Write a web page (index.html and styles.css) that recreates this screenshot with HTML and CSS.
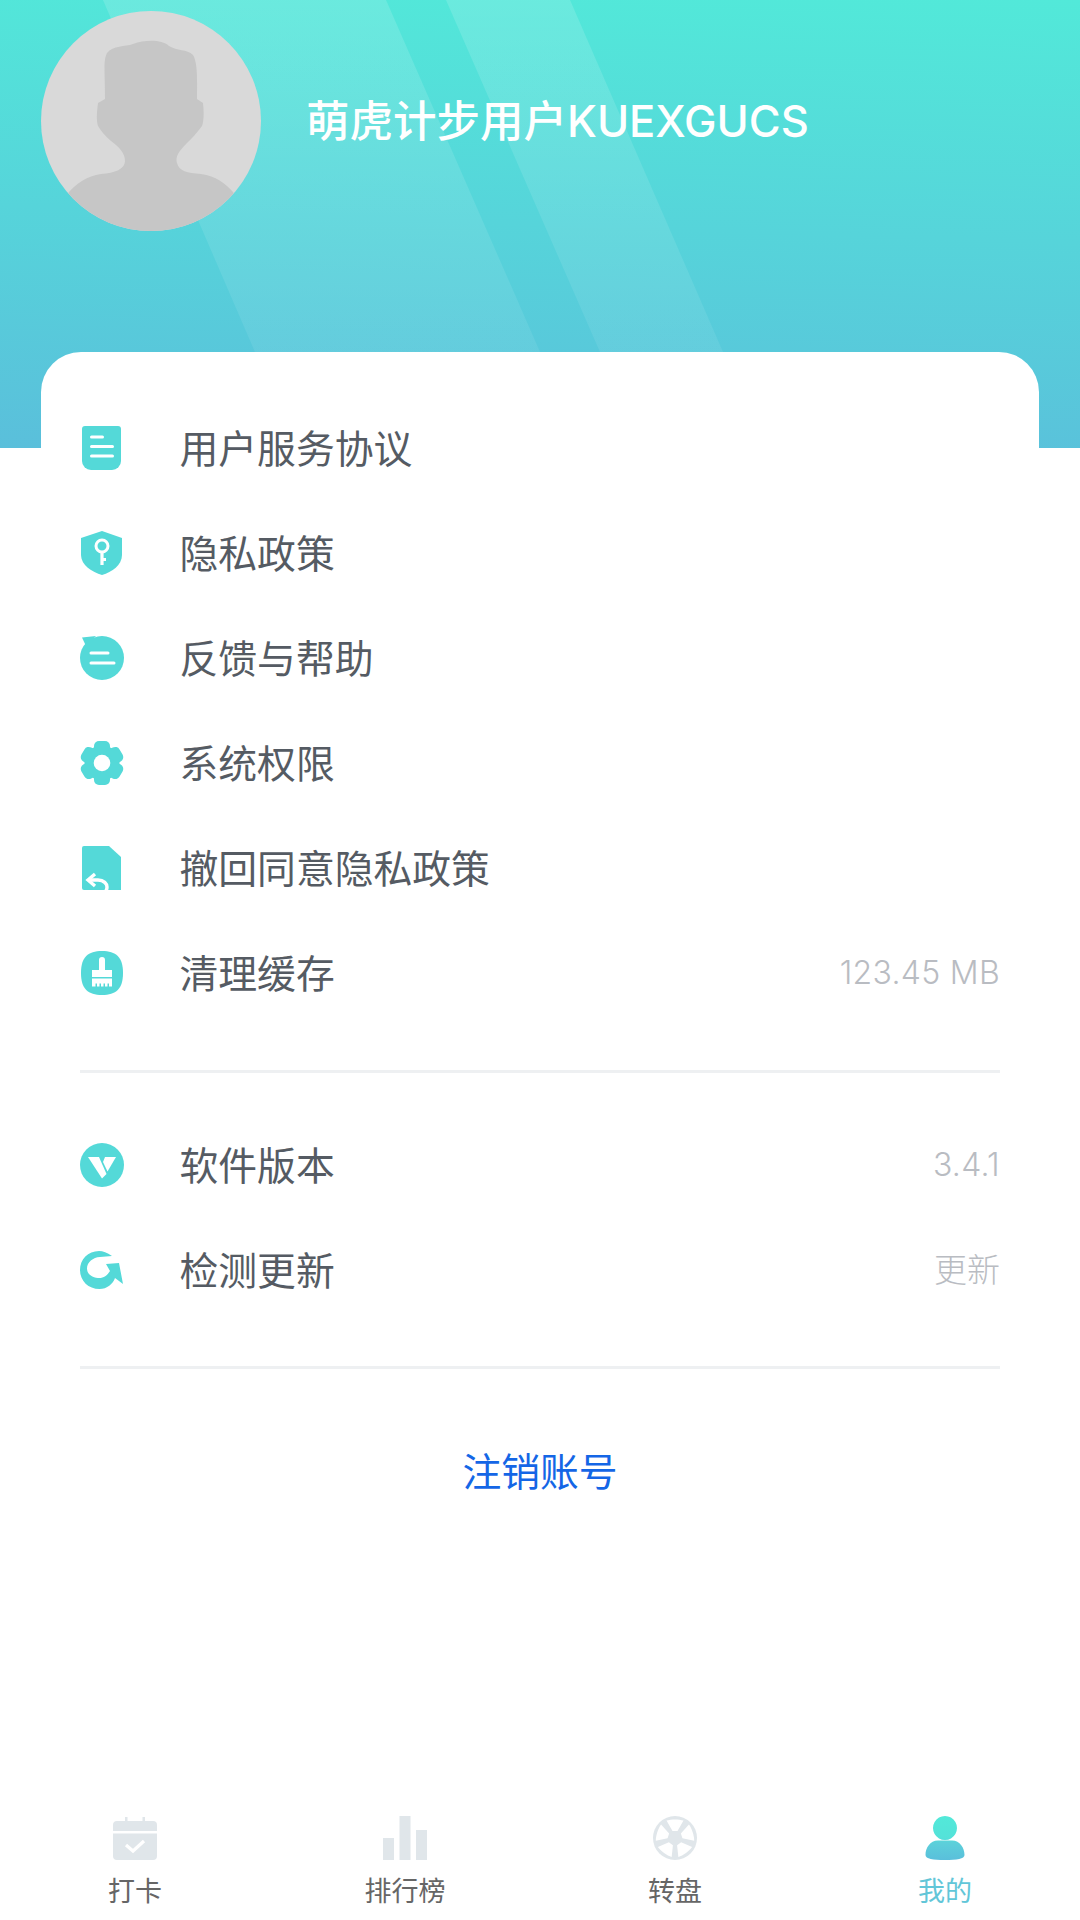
FILE: index.html
```html
<!DOCTYPE html>
<html lang="zh-CN">
<head>
<meta charset="utf-8">
<title>我的</title>
<link rel="stylesheet" href="styles.css">
</head>
<body>
<div class="page">
  <header class="hero">
    <svg class="hero-bands" viewBox="0 0 1080 448" preserveAspectRatio="none" aria-hidden="true">
      <defs><linearGradient id="bandfade" x1="0" y1="0" x2="0" y2="1"><stop offset="0" stop-color="#fff" stop-opacity="0.14"/><stop offset="1" stop-color="#fff" stop-opacity="0.07"/></linearGradient></defs>
      <polygon points="103,0 386,0 540,352 255,352" fill="url(#bandfade)" />
      <polygon points="446,0 570,0 723,352 600,352" fill="url(#bandfade)" />
    </svg>
    <svg class="avatar" viewBox="0 0 220 220" aria-hidden="true">
      <defs><clipPath id="av"><circle cx="110" cy="110" r="110"/></clipPath></defs>
      <circle cx="110" cy="110" r="110" fill="#d9d9d9"/>
      <path clip-path="url(#av)" fill="#c6c6c6" d="M64 88 C64 60 62 50 66 42 C72 34 84 36 92 33 C104 29 120 28 128 35 C136 40 146 38 152 44 C157 52 156 70 156 88 L162 92 C163 100 163 110 161 115 C156 122 150 128 146 132 C138 140 134 146 136 152 C138 160 146 162 160 163 C175 165 184 172 192 181 L220 230 L0 230 L28 181 C36 172 46 165 60 163 C74 162 84 158 84 150 C84 142 78 136 70 130 C64 125 60 120 57 115 C55 108 56 100 57 92 Z"/>
    </svg>
    <div class="name">萌虎计步用户KUEXGUCS</div>
  </header>

  <main class="card">
    <ul class="list">
      <li class="row">
        <svg class="icon" viewBox="0 0 44 44"><path fill="#54d9d8" d="M2 3a3 3 0 0 1 3-3h33a3 3 0 0 1 3 3v32a9 9 0 0 1-9 9H11a9 9 0 0 1-9-9z"/><g stroke="#fff" stroke-width="3" stroke-linecap="round"><path d="M11.500 11h11M11.500 20.500h21M11.500 30h21"/></g></svg>
        <span class="label">用户服务协议</span>
      </li>
      <li class="row">
        <svg class="icon" viewBox="0 0 44 44"><path fill="#54d9d8" d="M22 0 L42 7 V24 C42 34 32 41 22 44 C12 41 1 34 1 24 V7 Z"/><circle cx="22" cy="15" r="6" fill="none" stroke="#fff" stroke-width="3"/><path d="M22 21V34M22 28.500h4" stroke="#fff" stroke-width="3.200" fill="none"/></svg>
        <span class="label">隐私政策</span>
      </li>
      <li class="row">
        <svg class="icon" viewBox="0 0 44 44"><circle cx="22" cy="22" r="22" fill="#54d9d8"/><path fill="#54d9d8" d="M2 1.500 L16 0 L6 10 Z"/><path d="M11 17h17M11 27h23" stroke="#fff" stroke-width="3" stroke-linecap="round"/></svg>
        <span class="label">反馈与帮助</span>
      </li>
      <li class="row">
        <svg class="icon" viewBox="0 0 44 44"><g fill="#54d9d8"><circle cx="22" cy="22" r="17.500"/><rect x="14" y="0" width="16" height="44" rx="5"/><rect x="14" y="0" width="16" height="44" rx="5" transform="rotate(60 22 22)"/><rect x="14" y="0" width="16" height="44" rx="5" transform="rotate(120 22 22)"/></g><circle cx="22" cy="22" r="8.300" fill="#fff"/></svg>
        <span class="label">系统权限</span>
      </li>
      <li class="row">
        <svg class="icon" viewBox="0 0 44 44"><defs><clipPath id="doc"><path d="M2 2a2 2 0 0 1 2-2H29L41 11V44H4a2 2 0 0 1-2-2z"/></clipPath></defs><path fill="#54d9d8" d="M2 2a2 2 0 0 1 2-2H29L41 11V44H4a2 2 0 0 1-2-2z"/><g clip-path="url(#doc)" fill="none" stroke="#fff" stroke-width="3.400"><path d="M15 28 L8 34 L15 40"/><path d="M8 34H18C24 34 27 38 27 41C27 43 26 45 25 46"/></g></svg>
        <span class="label">撤回同意隐私政策</span>
      </li>
      <li class="row">
        <svg class="icon" viewBox="0 0 44 44"><path fill="#54d9d8" d="M22 0C36 0 43 6 43 22S36 44 22 44 1 38 1 22 8 0 22 0Z"/><path fill="#fff" d="M19 9a3 3 0 0 1 6 0v10h7v7h-20v-7h7zM12 27.500h20v8H29v-3h-1.500v3H25v-3h-1.500v3H21v-3h-1.500v3H17v-3h-1.500v3H12z"/></svg>
        <span class="label">清理缓存</span>
        <span class="value">123.45 MB</span>
      </li>
    </ul>
    <hr class="rule rule-a">
    <ul class="list list-b">
      <li class="row">
        <svg class="icon" viewBox="0 0 44 44"><circle cx="22" cy="22" r="22" fill="#54d9d8"/><path fill="#fff" d="M8 14H19L26.500 31L22 35.500Z"/><path fill="#fff" d="M25 14H36L27.500 28.500L23 19Z"/></svg>
        <span class="label">软件版本</span>
        <span class="value">3.4.1</span>
      </li>
      <li class="row">
        <svg class="icon" viewBox="0 0 44 44"><path fill="#54d9d8" d="M32 8 C27 4.500 23 3 19 3 C8 3 0 11.500 0 22 C0 33 8.500 41 19.500 41 C27 41 33 36 35 30 L43 36 L39 15 L26 16 L30 23 C27 28 23 30.500 18 30 C12 29.500 7 26 7 20.500 C7 14 13 9.500 20 9 C24 8.700 28 8.500 32 8 Z"/></svg>
        <span class="label">检测更新</span>
        <span class="value value-cjk">更新</span>
      </li>
    </ul>
    <hr class="rule rule-b">
    <div class="cancel">注销账号</div>
  </main>

  <nav class="tabs">
    <div class="tab">
      <svg class="tab-icon" viewBox="0 0 44 44"><path fill="#e0e6ea" d="M12 1h2.500v4h15V1H32v4h8a4 4 0 0 1 4 4v6H0V9a4 4 0 0 1 4-4h8zM0 17.500h44V40a4 4 0 0 1-4 4H4a4 4 0 0 1-4-4z"/><path d="M13 29l7 6 11-10" fill="none" stroke="#fff" stroke-width="3.200"/></svg>
      <span class="tab-label">打卡</span>
    </div>
    <div class="tab">
      <svg class="tab-icon" viewBox="0 0 44 44"><g fill="#e0e6ea"><rect x="0" y="22" width="11" height="22"/><rect x="16.500" y="0" width="11" height="44"/><rect x="33" y="14" width="11" height="30"/></g></svg>
      <span class="tab-label">排行榜</span>
    </div>
    <div class="tab">
      <svg class="tab-icon" viewBox="0 0 44 44"><circle cx="22" cy="22" r="22" fill="#e0e6ea"/><g fill="#fff"><path d="M13.500 4.600 C18 3 26 3 30.500 4.600 L24.500 15 H19.500 Z"/><path d="M13.500 4.600 C18 3 26 3 30.500 4.600 L24.500 15 H19.500 Z" transform="rotate(72 22 22)"/><path d="M13.500 4.600 C18 3 26 3 30.500 4.600 L24.500 15 H19.500 Z" transform="rotate(144 22 22)"/><path d="M13.500 4.600 C18 3 26 3 30.500 4.600 L24.500 15 H19.500 Z" transform="rotate(216 22 22)"/><path d="M13.500 4.600 C18 3 26 3 30.500 4.600 L24.500 15 H19.500 Z" transform="rotate(288 22 22)"/></g></svg>
      <span class="tab-label">转盘</span>
    </div>
    <div class="tab tab-on">
      <svg class="tab-icon" viewBox="0 0 44 44"><defs><linearGradient id="ug" x1="0" y1="0" x2="0" y2="1"><stop offset="0" stop-color="#52e9d9"/><stop offset="0.5" stop-color="#54e2d9"/><stop offset="0.6" stop-color="#5cd0da"/><stop offset="1" stop-color="#5abfdb"/></linearGradient></defs><path fill="url(#ug)" d="M22 0a12 12 0 1 1-.01 0ZM15 24.500H29C37 24.500 41.500 32 41.500 39C41.500 43 34 44 22 44S2.500 43 2.500 39C2.500 32 7 24.500 15 24.500Z"/></svg>
      <span class="tab-label">我的</span>
    </div>
  </nav>
</div>
</body>
</html>
```
FILE: styles.css
```css
* { box-sizing: border-box; }
html, body { margin: 0; padding: 0; }
body { font-family: "Noto Sans CJK SC", "Noto Sans", sans-serif; background: #fff; }

.page {
  width: 1080px;
  height: 1920px;
  display: flex;
  flex-direction: column;
  overflow: hidden;
  background: #fff;
}

.hero {
  position: relative;
  flex: none;
  height: 448px;
  padding: 11px 0 0 41px;
  display: flex;
  align-items: flex-start;
  background: linear-gradient(182deg, #52e9d9 0%, #5abfdb 100%);
}
.hero-bands { position: absolute; left: 0; top: 0; width: 1080px; height: 448px; }
.avatar { position: relative; width: 220px; height: 220px; flex: none; }
.name {
  position: relative;
  margin: 0 0 0 45px;
  height: 220px;
  line-height: 220px;
  font-family: "Inter", "Noto Sans CJK SC", sans-serif;
  font-size: 43.500px;
  font-weight: 500;
  color: #fff;
  white-space: nowrap;
}

.card {
  position: relative;
  flex: none;
  margin: -96px 41px 0;
  padding: 43px 39px 0;
  background: #fff;
  border-radius: 40px 40px 0 0;
}
.list { list-style: none; margin: 0; padding: 0; }
.row {
  height: 105px;
  display: flex;
  align-items: center;
}
.icon { width: 44px; height: 44px; flex: none; }
.label {
  margin-left: 55.500px;
  padding-bottom: 4px;
  font-size: 38.800px;
  color: #555b63;
  white-space: nowrap;
}
.value {
  margin-left: auto;
  font-family: "Inter", "Noto Sans CJK SC", sans-serif;
  font-weight: 300;
  font-size: 32px;
  letter-spacing: 0.300px;
  color: #b9bcc2;
  white-space: nowrap;
}
.value-cjk { font-family: "Noto Sans CJK SC", sans-serif; font-size: 33px; letter-spacing: 0; padding-bottom: 4px; }
.rule { border: 0; height: 3px; margin: 0; background: #eef0f2; }
.rule-a { margin-top: 45px; }
.list-b { margin-top: 39px; }
.rule-b { margin-top: 44px; }
.cancel {
  margin-top: 48px;
  height: 104px;
  line-height: 104px;
  text-align: center;
  font-size: 38.800px;
  color: #1466e6;
}

.tabs {
  margin-top: auto;
  height: 104px;
  display: grid;
  grid-template-columns: repeat(4, 270px);
  flex: none;
}
.tab { display: flex; flex-direction: column; align-items: center; }
.tab-icon { width: 44px; height: 44px; flex: none; }
.tab-label {
  margin-top: 11px;
  height: 38px;
  line-height: 38px;
  font-size: 27px;
  color: #666;
}
.tab-on .tab-label { color: #62c6d8; }
```
